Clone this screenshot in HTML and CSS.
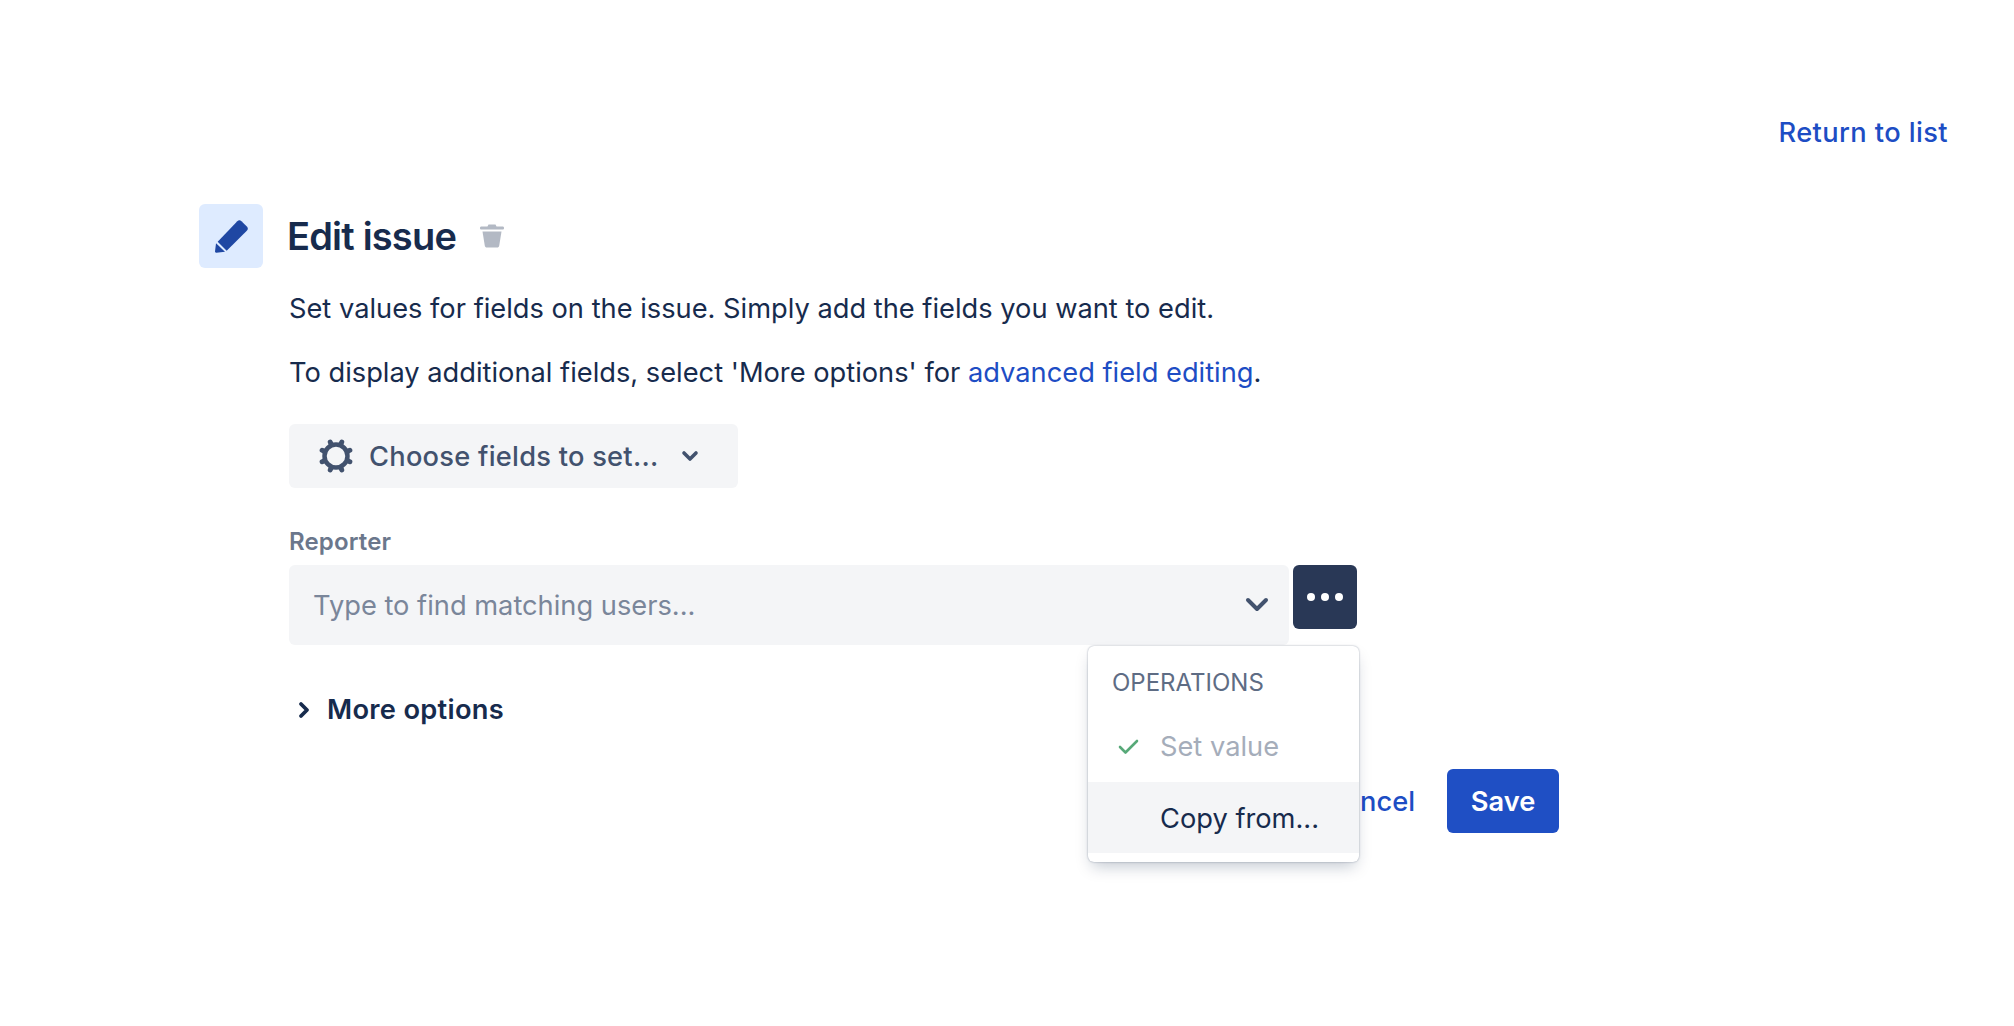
FILE: index.html
```html
<!DOCTYPE html>
<html lang="en">
<head>
  <meta charset="UTF-8" />
  <title>Edit issue</title>
  <link rel="stylesheet" href="styles.css">
</head>
<body>
  <div class="top-links">
    <a href="#" class="return-link">Return to list</a>
  </div>

  <div class="rule">
    <div class="rule-head">
      <div class="rule-icon">
        <svg width="40" height="40" viewBox="0 0 40 40">
          <path fill="#1f47a3" d="M26.300 5.200a3 3 0 0 1 4.200 0l5.300 5.300a3 3 0 0 1 0 4.200L15.700 34.700 6.700 25.700z"/>
          <path fill="#1f47a3" d="M5 27.300l9 8.400-8.600 1c-.9.100-1.500-.5-1.400-1.400z"/>
        </svg>
      </div>
      <h1>Edit issue</h1>
      <svg class="trash" width="26" height="26" viewBox="0 0 26 26">
        <path fill="#b3b9c4" d="M9.500 1.500h7l1 2h6.200c.7 0 1.300.6 1.300 1.300v.4c0 .7-.6 1.300-1.300 1.300H2.300c-.7 0-1.300-.6-1.300-1.300v-.4c0-.7.6-1.300 1.300-1.300h6.200z"/>
        <path fill="#b3b9c4" d="M3.500 8.500h19l-2.300 14.200c-.2 1-1 1.800-2 1.800H7.800c-1 0-1.800-.8-2-1.800z"/>
      </svg>
    </div>

    <div class="rule-body">
      <p class="intro">Set values for fields on the issue. Simply add the fields you want to edit.</p>
      <p class="intro">To display additional fields, select 'More options' for <a href="#">advanced field editing</a>.</p>

      <button class="choose-btn">
        <svg width="40" height="40" viewBox="0 0 40 40">
          <circle cx="20" cy="20" r="11.500" fill="none" stroke="#42526e" stroke-width="4.500"/>
          <path fill="none" stroke="#42526e" stroke-width="5" stroke-linecap="round" d="M25.170 7.530L25.740 6.140M14.830 7.530L14.260 6.140M25.170 32.470L25.740 33.860M14.830 32.470L14.260 33.860M32.470 14.830L33.860 14.260M32.470 25.170L33.860 25.740M7.530 14.830L6.140 14.260M7.530 25.170L6.140 25.740"/>
        </svg>
        <span>Choose fields to set...</span>
        <svg class="chev-small" width="18" height="12" viewBox="0 0 18 12">
          <path fill="none" stroke="#42526e" stroke-width="3.600" stroke-linecap="round" stroke-linejoin="round" d="M3 3l6 6 6-6"/>
        </svg>
      </button>

      <label class="field-label">Reporter</label>
      <div class="field-row">
        <div class="select-box">
          <span>Type to find matching users...</span>
          <svg width="24" height="16" viewBox="0 0 24 16">
            <path fill="none" stroke="#42526e" stroke-width="4" stroke-linecap="round" stroke-linejoin="round" d="M3 3l9 9 9-9"/>
          </svg>
        </div>
        <div class="ops-wrap">
          <button class="ops-btn"><i></i><i></i><i></i></button>
          <div class="ops-menu">
            <div class="ops-title">OPERATIONS</div>
            <div class="ops-item disabled">
              <svg width="22" height="18" viewBox="0 0 22 18">
                <path fill="none" stroke="#57a978" stroke-width="2.600" stroke-linecap="round" stroke-linejoin="round" d="M2 9l5.500 5.500L19 3"/>
              </svg>
              <span>Set value</span>
            </div>
            <div class="ops-item active"><span>Copy from...</span></div>
          </div>
        </div>
      </div>

      <div class="more-options">
        <svg width="12" height="18" viewBox="0 0 12 18">
          <path fill="none" stroke="#172b4d" stroke-width="3.800" stroke-linecap="round" stroke-linejoin="round" d="M3 3l6 6-6 6"/>
        </svg>
        <span>More options</span>
      </div>

      <div class="actions">
        <a href="#" class="cancel">Cancel</a>
        <button class="save-btn">Save</button>
      </div>
    </div>
  </div>
</body>
</html>
```

FILE: styles.css
```css
body, html {
  margin: 0;
  padding: 0;
  min-height: 100vh;
  font-family: Inter, "Liberation Sans", sans-serif;
  font-size: 27.25px;
  color: #172b4d;
  background-color: #fff;
}

a {
  color: #1d4dc4;
  text-decoration: none;
}

.top-links {
  display: flex;
  justify-content: flex-end;
  padding: 114px 66px 0 0;
}

.return-link {
  font-weight: 500;
  letter-spacing: 0.4px;
  line-height: 38px;
}

.rule {
  margin: 52px 0 0 199px;
  width: 1360px;
}

.rule-head {
  display: flex;
  align-items: center;
}

.rule-icon {
  display: flex;
  align-items: center;
  justify-content: center;
  width: 64px;
  height: 64px;
  border-radius: 6px;
  background-color: #deebff;
}

h1 {
  margin: 0 0 0 24px;
  font-size: 38px;
  font-weight: 600;
  letter-spacing: -0.8px;
}

.trash {
  margin-left: 23px;
}

.rule-body {
  padding-left: 90px;
}

.intro {
  margin: 0;
  line-height: 38px;
  padding-top: 26px;
}

.rule-head + .rule-body .intro:first-child {
  padding-top: 22px;
}

.choose-btn {
  display: flex;
  align-items: center;
  width: 449px;
  height: 64px;
  margin-top: 32px;
  padding: 0 0 0 27px;
  border: none;
  border-radius: 6px;
  background-color: #f4f5f7;
  color: #42526e;
  font-family: inherit;
  font-size: 27.25px;
  font-weight: 500;
  letter-spacing: 0.25px;
}

.choose-btn span {
  margin: 0 0 0 13px;
}

.chev-small {
  margin-left: 23px;
}

.field-label {
  display: block;
  margin-top: 34px;
  font-size: 24px;
  font-weight: 600;
  letter-spacing: 0.15px;
  line-height: 39px;
  margin-bottom: 4px;
  color: #6b778c;
}

.field-row {
  display: flex;
  align-items: flex-start;
  gap: 4px;
}

.select-box {
  display: flex;
  align-items: center;
  justify-content: space-between;
  width: 1000px;
  height: 80px;
  box-sizing: border-box;
  padding: 0 20px 0 24px;
  border-radius: 6px;
  background-color: #f4f5f7;
  color: #7a869a;
}

.ops-wrap {
  position: relative;
}

.ops-btn {
  display: flex;
  align-items: center;
  justify-content: center;
  gap: 6px;
  width: 64px;
  height: 64px;
  padding: 0;
  border: none;
  border-radius: 6px;
  background-color: #293856;
}

.ops-btn i {
  width: 8px;
  height: 8px;
  border-radius: 50%;
  background-color: #fff;
}

.ops-menu {
  position: absolute;
  top: 81px;
  right: -2px;
  width: 271px;
  height: 216px;
  box-sizing: border-box;
  padding-top: 17px;
  border-radius: 6px;
  background-color: #fff;
  box-shadow: 0 8px 16px -4px rgba(9, 30, 66, 0.25), 0 0 2px rgba(9, 30, 66, 0.4);
}

.ops-title {
  padding-left: 24px;
  font-size: 24px;
  line-height: 40px;
  color: #5e6c84;
}

.ops-item {
  display: flex;
  align-items: center;
  height: 71px;
  padding-left: 72px;
  position: relative;
}

.ops-item svg {
  position: absolute;
  left: 30px;
  top: 28px;
}

.ops-item.disabled {
  height: 72px;
  margin-top: 7px;
  color: #a5adba;
}

.ops-item.active {
  background-color: #f4f5f7;
}

.ops-item.active span {
  padding-top: 2px;
}

.more-options {
  display: flex;
  align-items: center;
  gap: 17px;
  margin-top: 46px;
  padding-left: 9px;
  font-weight: 600;
  letter-spacing: 0.3px;
  line-height: 38px;
}

.actions {
  display: flex;
  justify-content: flex-end;
  align-items: center;
  gap: 32px;
  margin-top: 40px;
}

.cancel {
  font-weight: 500;
}

.save-btn {
  width: 112px;
  height: 64px;
  border: none;
  border-radius: 6px;
  background-color: #1f4fc4;
  color: #fff;
  font-family: inherit;
  font-size: 27.25px;
  font-weight: 600;
}
```
